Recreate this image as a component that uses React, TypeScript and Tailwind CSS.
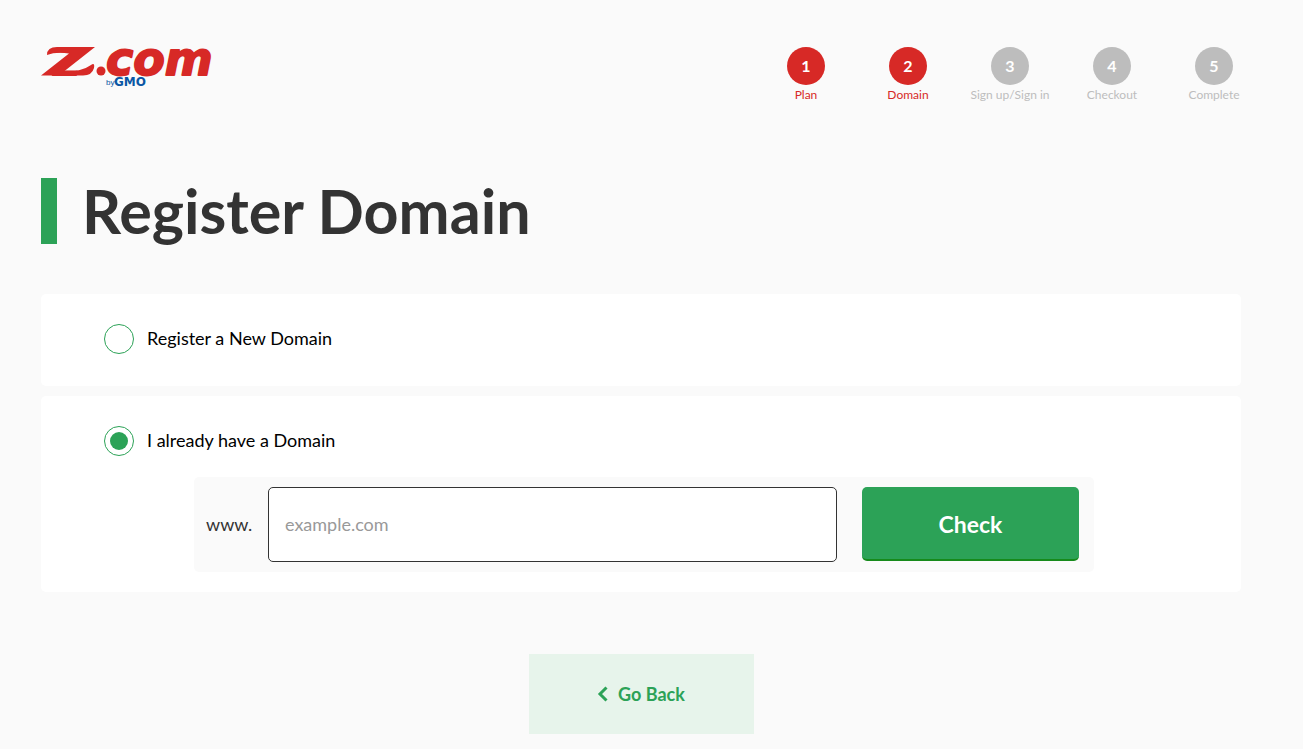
import { useState } from "react";

const steps = ["Plan", "Domain", "Sign up/Sign in", "Checkout", "Complete"];
const currentStep = 2;

function Logo() {
  return (
    <a href="#home" aria-label="Z.com by GMO" className="block">
      <svg width="176" height="42" viewBox="0 0 176 42" className="block overflow-visible">
        <g fill="#d72926">
          <text x="12" y="28.500" fontFamily="DejaVu Sans" fontWeight="700" fontStyle="italic" fontSize="39">Z</text>
          <path d="M6 8Q6 0 16 0H54L21 26Q42 24 50 18Q54 15 53 21Q51 28.500 42 28.500H0L28 6.500Q15 4.500 6 8Z" />
          <circle cx="60" cy="24" r="4.500" />
          <text x="65" y="28" fontFamily="DejaVu Sans" fontWeight="700" fontStyle="italic" fontSize="46" stroke="#d72926" strokeWidth="1.800" strokeLinejoin="round">com</text>
        </g>
        <g fill="#0a57a4">
          <text x="65" y="38" fontFamily="Liberation Sans" fontSize="8">by</text>
          <text x="73" y="38.500" fontFamily="DejaVu Sans" fontWeight="700" fontSize="12">GMO</text>
        </g>
      </svg>
    </a>
  );
}

function Steps() {
  return (
    <ol className="flex">
      {steps.map((label, i) => {
        const done = i < currentStep;
        return (
          <li key={label} className={`flex w-[102px] flex-col items-center ${done ? "text-[#d72926]" : "text-[#bdbdbd]"}`}>
            <span className={`flex size-[38px] items-center justify-center rounded-full text-base font-bold text-white ${done ? "bg-[#d72926]" : "bg-[#bdbdbd]"}`}>
              {i + 1}
            </span>
            <span className="text-[12px] leading-5 whitespace-nowrap">{label}</span>
          </li>
        );
      })}
    </ol>
  );
}

function Option({ label, checked, onSelect }: { label: string; checked: boolean; onSelect: () => void }) {
  return (
    <label className="flex w-fit cursor-pointer items-center gap-[13px] text-lg text-black">
      <span className="grid size-[30px] place-items-center">
        <input
          type="radio"
          name="domain"
          checked={checked}
          onChange={onSelect}
          className="col-start-1 row-start-1 size-[30px] appearance-none rounded-full border border-[#2ca257] bg-white"
        />
        {checked && <span className="pointer-events-none col-start-1 row-start-1 size-[18px] rounded-full bg-[#2ca257]" />}
      </span>
      <span className="pb-0.5 leading-7">{label}</span>
    </label>
  );
}

export default function App() {
  const [choice, setChoice] = useState("own");
  return (
    <div className="min-h-screen bg-[#fafafa] pr-[21px] pb-[15px] pl-px font-['Lato',sans-serif] text-[#333] sm:pl-0">
      <div className="mx-auto max-w-[1200px]">
        <header className="flex items-start justify-between pt-[47px]">
          <Logo />
          <div className="-mr-6">
            <Steps />
          </div>
        </header>

        <main>
          <h1 className="mt-[73px] border-l-[16px] border-[#2ca257] pl-[25px] text-[61px] leading-[66px] font-bold">
            Register Domain
          </h1>

          <section className="mt-[50px] rounded-[5px] bg-white px-[63px] pt-[30px] pb-8">
            <Option label="Register a New Domain" checked={choice === "new"} onSelect={() => setChoice("new")} />
          </section>

          <section className="mt-[10px] rounded-[5px] bg-white px-[63px] pt-[30px] pb-5">
            <Option label="I already have a Domain" checked={choice === "own"} onSelect={() => setChoice("own")} />
            <form
              onSubmit={(e) => e.preventDefault()}
              className="mt-[21px] mr-[84px] ml-[90px] flex items-center rounded-[5px] bg-[#fafafa] py-[10px] pr-[15px] pl-3"
            >
              <label htmlFor="domain-name" className="w-[62px] pb-0.5 text-lg">www.</label>
              <input
                id="domain-name"
                type="text"
                placeholder="example.com"
                className="h-[75px] min-w-0 flex-1 rounded-[5px] border border-[#333] bg-white px-4 pb-0.5 text-lg placeholder:text-[#999]"
              />
              <button
                type="submit"
                className="ml-[25px] h-[74px] w-[217px] self-start rounded-[5px] border-b-2 border-[#168a1b] bg-[#2ca257] pt-0.5 text-[23px] font-bold text-white"
              >
                Check
              </button>
            </form>
          </section>

          <div className="mt-[62px] flex justify-center">
            <button type="button" className="flex h-20 w-[225px] items-center justify-center gap-[10px] bg-[#e7f4eb] text-lg font-bold text-[#2ca257]">
              <svg width="11" height="16" viewBox="0 0 11 16" fill="none" stroke="currentColor" strokeWidth="3">
                <path d="M9.500 1.500L3 8L9.500 14.500" />
              </svg>
              Go Back
            </button>
          </div>
        </main>
      </div>
    </div>
  );
}
